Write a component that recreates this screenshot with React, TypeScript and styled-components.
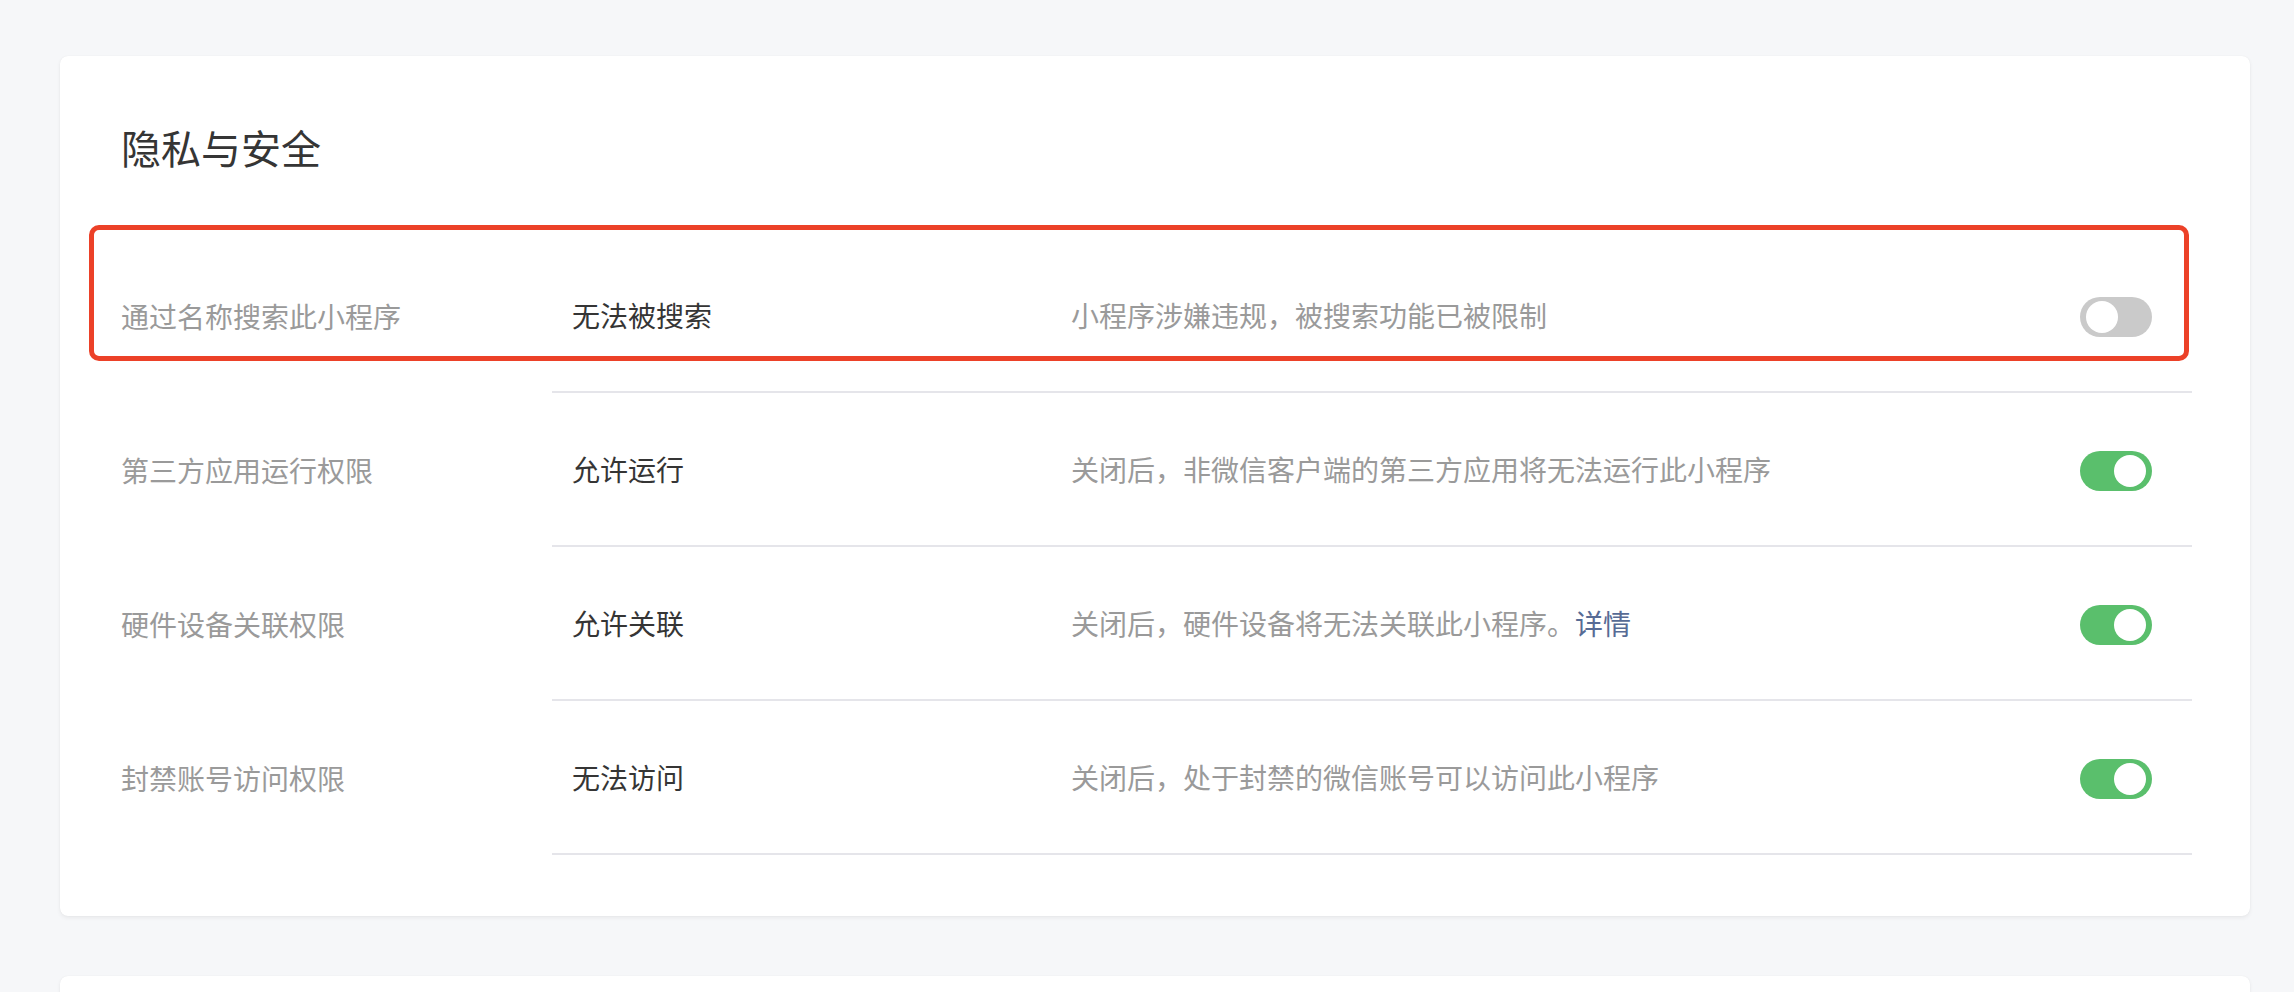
import React from "react";
import styled, { createGlobalStyle } from "styled-components";

const GlobalStyle = createGlobalStyle`
  html, body {
    margin: 0;
    padding: 0;
    background: #f6f7f9;
  }
  body {
    font-family: "Noto Sans CJK SC", "Noto Sans", "Liberation Sans", sans-serif;
    -webkit-font-smoothing: antialiased;
  }
`;

const Page = styled.div`
  display: flex;
  flex-direction: column;
  gap: 60px;
  padding: 56px 44px 0 60px;
  height: 992px;
  box-sizing: border-box;
  overflow: hidden;
`;

const Card = styled.section<{ $empty?: boolean }>`
  position: relative;
  background: #fff;
  border-radius: 8px;
  box-shadow: 0 2px 4px rgba(0, 0, 0, 0.06), 0 0 1px rgba(0, 0, 0, 0.08);
  padding: ${(p) => (p.$empty ? "0" : "71px 58px 61px 61px")};
  min-height: ${(p) => (p.$empty ? "200px" : "auto")};
  flex-shrink: 0;
`;

const Title = styled.h2`
  margin: 0 0 72px;
  font-size: 40px;
  line-height: 40px;
  font-weight: 400;
  color: #353535;
`;

const Row = styled.div`
  display: flex;
  height: 154px;
`;

const Label = styled.div`
  width: 431px;
  display: flex;
  align-items: center;
  font-size: 28px;
  color: #9a9a9a;
`;

const Body = styled.div`
  flex: 1;
  display: flex;
  align-items: center;
  padding: 0 40px 0 20px;
  border-bottom: 2px solid #e5e5ea;
`;

const Value = styled.div`
  width: 499px;
  font-size: 28px;
  color: #353535;
`;

const Desc = styled.div`
  flex: 1;
  font-size: 28px;
  color: #9a9a9a;

  a {
    color: #576b95;
    text-decoration: none;
  }
`;

const Track = styled.button<{ $on: boolean }>`
  position: relative;
  width: 72px;
  height: 40px;
  margin-top: 4px;
  border: none;
  padding: 0;
  border-radius: 20px;
  background: ${(p) => (p.$on ? "#5abf6c" : "#cacaca")};
  cursor: pointer;

  &::after {
    content: "";
    position: absolute;
    top: 4px;
    left: ${(p) => (p.$on ? "34px" : "6px")};
    width: 32px;
    height: 32px;
    border-radius: 50%;
    background: #fff;
  }
`;

const Highlight = styled.div`
  position: absolute;
  left: 29px;
  top: 169px;
  width: 2100px;
  height: 136px;
  box-sizing: border-box;
  border: 5px solid #ec4128;
  border-radius: 10px;
  pointer-events: none;
`;

const rows = [
  {
    label: "通过名称搜索此小程序",
    value: "无法被搜索",
    desc: "小程序涉嫌违规，被搜索功能已被限制",
    on: false,
  },
  {
    label: "第三方应用运行权限",
    value: "允许运行",
    desc: "关闭后，非微信客户端的第三方应用将无法运行此小程序",
    on: true,
  },
  {
    label: "硬件设备关联权限",
    value: "允许关联",
    desc: "关闭后，硬件设备将无法关联此小程序。",
    link: "详情",
    on: true,
  },
  {
    label: "封禁账号访问权限",
    value: "无法访问",
    desc: "关闭后，处于封禁的微信账号可以访问此小程序",
    on: true,
  },
];

export default function App() {
  return (
    <>
      <GlobalStyle />
      <Page>
        <Card>
          <Title>隐私与安全</Title>
          {rows.map((r) => (
            <Row key={r.label}>
              <Label>{r.label}</Label>
              <Body>
                <Value>{r.value}</Value>
                <Desc>
                  {r.desc}
                  {r.link && <a href="#">{r.link}</a>}
                </Desc>
                <Track $on={r.on} aria-label={r.label} />
              </Body>
            </Row>
          ))}
          <Highlight />
        </Card>
        <Card $empty />
      </Page>
    </>
  );
}
